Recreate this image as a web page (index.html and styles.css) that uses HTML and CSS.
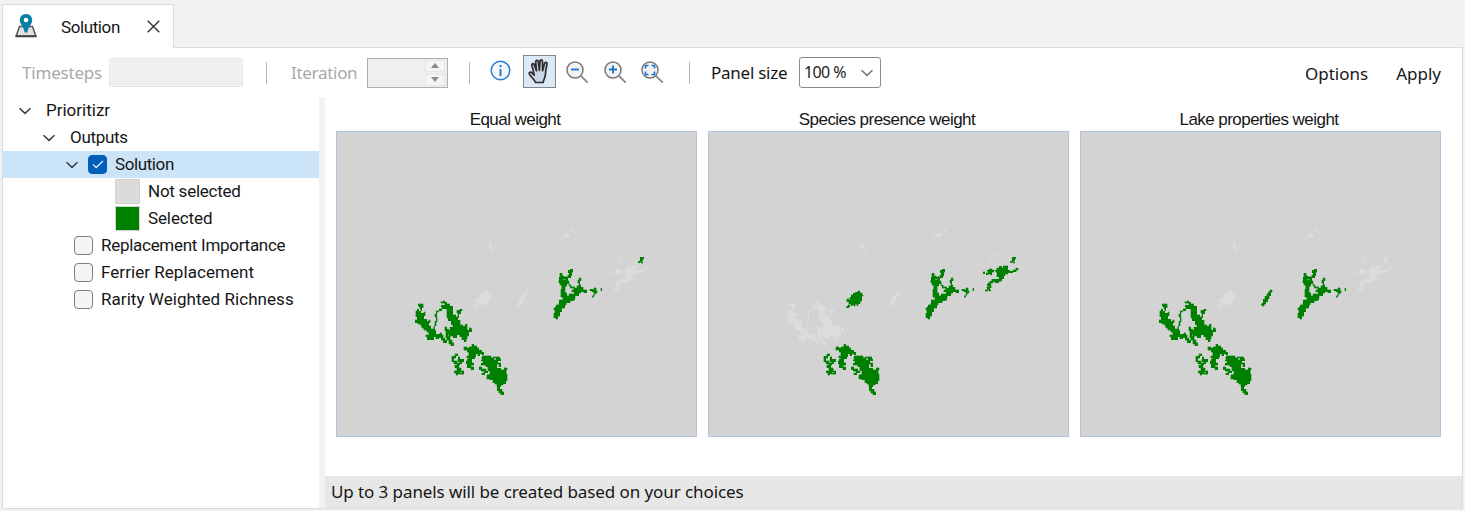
FILE: index.html
```html
<!DOCTYPE html>
<html lang="en">
<head>
<meta charset="utf-8">
<title>Solution</title>
<link rel="stylesheet" href="styles.css">
</head>
<body>
<svg class="defs" width="0" height="0">
  <symbol id="chevron" viewBox="0 0 14 8"><path d="M1.5 1.2 7 6.4l5.500-5.200" fill="none" stroke="currentColor" stroke-width="1.500"/></symbol>
  <symbol id="lens" viewBox="0 0 24 24"><circle cx="10" cy="10" r="8" fill="#f3f3f3" stroke="#777" stroke-width="1.500"/><path d="m15.700 15.700 7 7" stroke="#8a8a8a" stroke-width="1.900"/></symbol>
  <g id="west" transform="translate(400 280) scale(.33333)">
    <path d="M54 72h16v12h-4v8h-4v8h10v-4h4v12h-4v10h8v6h7v-4h4v8h-4v10h6v8h9v5h6v12h12v-4h6v6h4v8h4v6h6v10h-10v-8h-6v-8h-8v4h-9v-6h-6v8H82v-8h-4v-6h8v-8h-6v-6h-8v-6h-6v-6h-4v-6h-8v-4h-8v-10h6v-8h-4V92h4v-4h4v6h6v-8h-2v-6h-4z"/>
    <path d="M102 148v-10h3v-14h4v-12h-4v-11h4v-9h9v-5h8v-5h12v5h-12v5h-9v5h-7v14h2v14h-3v13h-4v12z"/>
    <path d="M121 66h7v-4h6v5h6v5h10v7h9v25h8v6h7v-10h-3v-9h9v-3h7v5h-5v8h-5v12h-4v8h8v13h8v5h7v-6h6v18h7v-5h6v10h-9v13h-4v9h-3v8h-6v-7h-7v-9h-7v-6h-9v9h-10v-4h-9v10h6v10h5v9h-9v-5h-6v-12h-6v-12h5v-6h-9v-15h10v5h6v-9h6v-9h-5v-12h-9v-8h-5V87h-7v-6h-9v-5h10v-6h-11z"/>
    <path d="M134 140h6v12h-6zM150 142h22v22h-22zM184 150h20v16h-20zM208 143h6v6h-6zM138 162h7v12h-7z"/>
  </g>
  <g id="south" transform="translate(400 280) scale(.33333)">
    <path d="M156 229h8v-8h10v7h-6v7h-6v10h-6zM174 230h6v8h12v8h-6v6h-7v-7h-6v-7h3zM162 243h8v8h-8zM164 254h8v-5h7v7h-3v8h8v8h8v11h-6v-8h-7v6h-6v5h-6v-8h-4v-6h7v-8h-6zM176 278h14v5h-14z"/>
    <path d="M192 201h10v4h5v-5h9v-7h6v4h9v7h5v7h9v6h6v8h-6v-4h-6v7h-6v-6h-6v8h-5v6h-7v12h7v8h-8v5h7v9h-9v-6h-10v-13h-3v-8h7v-9h-5v-7h6v-10h-5v-6h-10z"/>
    <path d="M202 236h12v22h-12zM220 205h14v14h-14zM216 230h8v6h-8z"/>
    <path d="M247 227h27v6h8v6h7v-9h10v6h4v6h-9v6h9v12h-7v-7h-6v12h12v4h11v-6h9v8h-3v11h3v20h-4v9h-8v5h-7v4h-12v-7h-6v-5h-6v-9h-10v-5h-7v-10h7v-11h-4v-12h-8v-5h-13v-6h5v-8h-5zM238 261h7v5h12v7h7v6h-10v6h-9v-5h6v-6h-7v-5h-6zM292 322h7v6h8v7h4v10h-9v-5h-5v-8h-5z"/>
    <path d="M260 284h18v14h-18zM280 230h8v5h-8zM264 250h14v20h-14z"/>
  </g>
  <g id="lake" transform="translate(540 220) scale(.33333)">
    <path fill-rule="evenodd" d="M60 160h7v7h6v8h-4v5h8v-9h6v-6h5v-7h-3v-7h6v-3h8v9h-3v10h-3v7h-10v8h5v13h6v5h10v5h7v-7h6v-9h-3v-9h4v-6h6v9h-4v12h3v9h6v5h12v9h-9v-3h-9v5h-9v6h-8v9h-6v7h-9v7H79v7h-5v9h-9v10h-6v14h-5v9h-6v-4h-7v-14h3v-9h-3v-8h8v-9h7v-5h7v-8h6v-9h-6v-24h3v-12h-6v-7h-4zM80 191v8h-4v20h5v8h7v-5h15v-7h-8v-5h7v-5h-11v-8h-5v-6z"/>
    <path d="M66 190h9v32h-9zM84 227h20v14H84zM104 216h12v12h-12zM58 240h18v14H58zM46 260h14v14H46zM114 202h16v9h-16zM70 170h12v8H70z"/>
    <path d="M149 208h9v3h4v-8h7v9h3v8h-6v6h-4v6h-5v-4h4v-12h-5v-3h-7zM182 205h4v8h-4z"/>
  </g>
  <g id="northeast" transform="translate(538 220) scale(.33333)">
    <path d="M220 156h5v5h-5zM230 151h6v-5h9v4h6v7h-5v8h-5v-4h-6v3h-6v-5h6v-5h-5zM254 151h7v-8h7v-4h7v5h5v-7h14v14h5v3h10v-4h8v-5h8v6h-6v4h-10v4h-15v4h-9v5h-4v9h-6v7h-9v4h-10v-5h7v-6h5v-8h-6v-4h6v-8h-9zM233 189h9v5h-5v5h-5zM230 201h8v-5h6v7h-5v6h4v5h-5v-5h-4v5h-8v-5h6z"/>
    <path d="M260 146h20v24h-20zM246 178h22v7h-22zM240 184h8v6h-8zM282 140h12v20h-12z"/>
  </g>
  <g id="tip" transform="translate(538 220) scale(.33333)"><path d="M307 112h11v5h-4v5h-4v5h-7v-5h4zM301 125h4v4h-4zM310 126h4v4h-4z"/></g>
  <g id="oval" transform="translate(398 220) scale(.33333)"><path d="M230 237h6v4h3v-9h5v-7h6v-5h6v-3h8v-4h6v5h7v6h3v5h-4v15h-5v8h-6v6h-5v-5h-4v6h-5v-5h-4v4h-5v-6h-5v-6h-6zM230 259h4v-4h6v5h-4v4h-7z"/></g>
  <g id="sliver" transform="translate(406 220) scale(.33333)"><path d="M336 250h4v-12h5v-9h5v-8h5v-5h5v-6h7v7h-4v11h-5v9h-5v9h-5v7h-5v6h-6v-4h-4z"/></g>
  <g id="faint">
    <path d="m562 236 2-2 4-1 2 3-3 1-2 0-3 1zM571 228l2 1 3 4-1 1-3-3zM617 260l2-3 2 1-3 3zM621 256l4-2 1 1-4 2zM489 244l2-1 1 5 3 4-2 0-3-4zM567 352l2-2 1 1-2 2zM572 347l2-1 0 2z"/>
  </g>
</svg>

<main class="window">
  <header class="tabs">
    <div class="tab">
      <svg class="pin" width="22" height="24" viewBox="0 0 22 24"><path d="M4.500 12.500 1.200 22h19.600l-3.300-9.500z" fill="#e1e1e1" stroke="#555" stroke-width="1.500"/><path d="M.5 22.300h21" stroke="#444" stroke-width="2"/><path d="M11 0C7.200 0 4.800 2.800 4.800 6c0 4.500 4.200 7 4.800 12.500h2.800C13 13 17.200 10.500 17.200 6c0-3.200-2.400-6-6.200-6z" fill="#087fa5"/><circle cx="11" cy="6" r="2.300" fill="#fff"/></svg>
      <span class="tab-name"><span class="t-sol">Solution</span></span>
      <svg class="close" width="13" height="13" viewBox="0 0 13 13"><path d="m.7.7 11.600 11.600M12.300.7.7 12.300" stroke="#333" stroke-width="1.400"/></svg>
    </div>
    <div class="tab-rest"></div>
  </header>

  <section class="body">
    <div class="toolbar">
      <span class="muted timesteps">Timesteps</span><span class="field"></span>
      <i class="rule rule-a"></i>
      <span class="muted iteration">Iteration</span>
      <span class="spinner"><span class="steps"><b><svg width="8" height="5"><path d="M0 5 4 0l4 5z" fill="#8b8b8b"/></svg></b><b><svg width="8" height="5"><path d="m0 0 4 5 4-5z" fill="#8b8b8b"/></svg></b></span></span>
      <i class="rule rule-b"></i>
      <svg class="info" width="21" height="21" viewBox="0 0 21 21"><circle cx="10.500" cy="10.500" r="9.300" fill="#f4f8fc" stroke="#2b7cd3" stroke-width="1.500"/><path d="M10.500 9v7M10.500 5v2.200" stroke="#1f73cc" stroke-width="1.900"/></svg>
      <span class="hand"><svg width="23" height="25" viewBox="0 0 23 25"><path d="M7.500 23.500C6 20 2.500 17.500 1.300 14.800c-.6-1.500 1.400-2.200 2.400-1.100l2.500 2.400L3.900 6.300c-.4-1.800 1.900-2.300 2.400-.7l2.200 6.200L7.700 3c-.1-2 2.400-2.200 2.600-.3l1.100 8.600.6-9.100c.1-1.900 2.500-1.700 2.500.2l.1 9.300 2-7.300c.5-1.700 2.800-1.100 2.400.7-.9 4-1.400 6.700-1.500 9.700-.1 3.500-1.700 5-2.300 8.700z" fill="#c9d6e3" stroke="#2e2e2e" stroke-width="1.700" stroke-linejoin="round"/></svg></span>
      <svg class="zoom z1" width="24" height="24"><use href="#lens"/><path d="M6 9.500h8" stroke="#1c72ca" stroke-width="1.800"/></svg>
      <svg class="zoom" width="24" height="24"><use href="#lens"/><path d="M6 9.500h8M10 5.500v8" stroke="#1c72ca" stroke-width="1.800"/></svg>
      <svg class="zoom" width="24" height="24"><use href="#lens"/><path d="M5.500 8.500v-3h3m3 0h3v3m0 3v3h-3m-3 0h-3v-3" fill="none" stroke="#1c72ca" stroke-width="1.600"/></svg>
      <i class="rule rule-c"></i>
      <span class="panel-size">Panel size</span>
      <span class="select"><span class="percent">100 %</span><svg width="14" height="8"><use href="#chevron"/></svg></span>
      <nav class="actions"><span>Options</span><span>Apply</span></nav>
    </div>

    <div class="content">
      <aside class="tree">
        <div class="row l0"><svg class="chev" width="14" height="8"><use href="#chevron"/></svg><span>Prioritizr</span></div>
        <div class="row l1"><svg class="chev" width="14" height="8"><use href="#chevron"/></svg><span class="t-out">Outputs</span></div>
        <div class="row l2"><svg class="chev" width="14" height="8"><use href="#chevron"/></svg><span class="check on"><svg width="12" height="9"><path d="m1 4.500 3.200 3L11 1" fill="none" stroke="#dcecff" stroke-width="1.300"/></svg></span><span class="t-sol">Solution</span></div>
        <div class="row l3"><i class="swatch"></i><span class="t-not">Not selected</span></div>
        <div class="row l3"><i class="swatch green"></i><span class="t-sel">Selected</span></div>
        <div class="row l4"><i class="check"></i><span class="t-rep">Replacement Importance</span></div>
        <div class="row l4"><i class="check"></i><span class="t-fer">Ferrier Replacement</span></div>
        <div class="row l4"><i class="check"></i><span class="t-rar">Rarity Weighted Richness</span></div>
      </aside>
      <div class="splitter"></div>
      <div class="view">
        <div class="maps">
          <figure><figcaption>Equal weight</figcaption>
            <svg class="map" viewBox="337 132 359 304"><g class="unselected"><use href="#faint"/><use href="#oval"/><use href="#sliver"/><use href="#northeast"/></g><g class="selected"><use href="#west"/><use href="#south"/><use href="#lake"/><use href="#tip"/></g></svg></figure>
          <figure><figcaption>Species presence weight</figcaption>
            <svg class="map" viewBox="337 132 359 304"><g class="unselected"><use href="#faint"/><use href="#sliver"/><use href="#west"/></g><g class="selected"><use href="#oval"/><use href="#south"/><use href="#lake"/><use href="#northeast"/><use href="#tip"/></g></svg></figure>
          <figure><figcaption>Lake properties weight</figcaption>
            <svg class="map" viewBox="337 132 359 304"><g class="unselected"><use href="#faint"/><use href="#oval"/><use href="#northeast"/><use href="#tip"/></g><g class="selected"><use href="#sliver"/><use href="#west"/><use href="#south"/><use href="#lake"/></g></svg></figure>
        </div>
        <footer class="status">Up to 3 panels will be created based on your choices</footer>
      </div>
    </div>
  </section>
</main>
</body>
</html>
```

FILE: styles.css
```css
* { box-sizing: border-box; }
body { margin: 0; background: #f2f2f2; color: #161616; font: 17px/27px Roboto, "Liberation Sans", sans-serif; overflow: hidden; }
svg { display: block; flex: none; }
.defs { position: absolute; }
.window { height: 511px; padding: 4px 2px 2px; display: flex; flex-direction: column; }
.tabs { display: flex; height: 44px; flex: none; }
.tab { width: 172px; display: flex; align-items: center; background: #fff; border: 1px solid #dcdcdc; border-bottom: 0; padding: 1px 0 0 12px; }
.tab-name { margin-left: 24px; width: 86px; }
.pin { margin-top: -2px; }
.close { margin-top: -1px; }
.tab-rest { flex: 1; border-bottom: 1px solid #dcdcdc; }
.body { flex: 1; display: flex; flex-direction: column; background: #fff; border: 1px solid #dcdcdc; border-top: 0; min-height: 0; }
.toolbar { height: 49px; flex: none; display: flex; align-items: center; padding-left: 19px; white-space: nowrap; font-family: "Noto Sans", sans-serif; font-size: 17px; }
.muted { color: #a9a9a9; }
.timesteps { width: 87px; letter-spacing: -.2px; }
.field { width: 134px; height: 29px; background: #efefef; border: 2px solid #f5f5f5; outline: 1px solid #e5e5e5; outline-offset: -1px; border-radius: 3px; }
.rule { width: 1px; height: 22px; background: #b5b5b5; flex: none; }
.rule-a { margin-left: 23px; }
.iteration { margin-left: 24px; width: 76px; letter-spacing: -.3px; }
.spinner { width: 81px; height: 30px; background: #efefef; border: 1px solid #adadb3; padding: 1px 2px; display: flex; justify-content: flex-end; }
.steps { width: 20px; display: grid; gap: 2px; }
.steps b { display: flex; align-items: center; justify-content: center; background: #f4f4f4; border: 1px solid #e6e6e6; }
.rule-b { margin-left: 21px; }
.info { margin: -4px 0 0 20px; }
.hand { width: 33px; height: 33px; margin: -3px 0 0 12px; display: flex; align-items: center; justify-content: center; background: #dce9f7; border: 1px solid #858585; }
.zoom { margin: -2px 0 0 13.500px; }
.z1 { margin-left: 9px; }
.rule-c { margin-left: 25px; }
.panel-size { margin-left: 21px; width: 88px; letter-spacing: -.25px; }
.select { width: 82px; height: 31px; border: 1px solid #8b8b8b; border-radius: 3px; display: flex; align-items: center; justify-content: space-between; padding: 0 6px 0 4px; color: #222; font-size: 16px; }
.percent { letter-spacing: -.6px; }
.select svg { color: #777; }
.actions { margin-left: auto; display: flex; padding: 2px 21px 0 0; gap: 28px; }
.content { flex: 1; display: flex; min-height: 0; }
.tree { width: 316px; flex: none; }
.row { height: 27px; display: flex; align-items: center; white-space: nowrap; }
.l0 { padding-left: 15px; }
.l1 { padding-left: 39px; }
.l2 { padding-left: 62px; background: #cce4f7; }
.l3 { padding-left: 112px; }
.l4 { padding-left: 71px; }
.t-out { letter-spacing: -.3px; }
.t-sol { letter-spacing: -.4px; }
.t-not { letter-spacing: -.25px; }
.t-sel { letter-spacing: -.12px; }
.t-rep { letter-spacing: -.28px; }
.t-fer { letter-spacing: .05px; }
.t-rar { letter-spacing: .05px; }
.chev { color: #3c3c3c; }
.l0 .chev, .l1 .chev { margin-right: 14px; }
.l2 .chev { margin-right: 9px; }
.check { width: 19px; height: 19px; margin-right: 8px; border: 1px solid #808080; border-radius: 4px; background: #f4f4f4; display: flex; align-items: center; justify-content: center; flex: none; }
.on { background: #005fb8; border-color: #005fb8; }
.swatch { width: 25px; height: 25px; margin-right: 8px; background: #dbdbdb; border: 1px solid #d3d3d3; }
.green { background: #008000; }
.splitter { width: 6px; background: #f2f2f2; }
.view { flex: 1; display: flex; flex-direction: column; min-width: 0; }
.maps { flex: 1; display: flex; gap: 11px; padding: 9px 0 0 11px; }
figure { margin: 0; width: 361px; }
figcaption { height: 25px; padding-right: 3px; text-align: center; white-space: nowrap; font-family: "Liberation Sans", sans-serif; letter-spacing: -.55px; }
.map { width: 361px; height: 306px; background: #d3d3d3; border: 1px solid #b0c4de; shape-rendering: crispEdges; }
.unselected { fill: #dcdcdc; }
.selected { fill: #008000; stroke: #008000; stroke-width: 1px; }
.status { height: 32px; flex: none; background: #e7e7e7; padding: 2px 0 0 6px; font-family: "Noto Sans", sans-serif; font-size: 17px; letter-spacing: -.09px; }
```
